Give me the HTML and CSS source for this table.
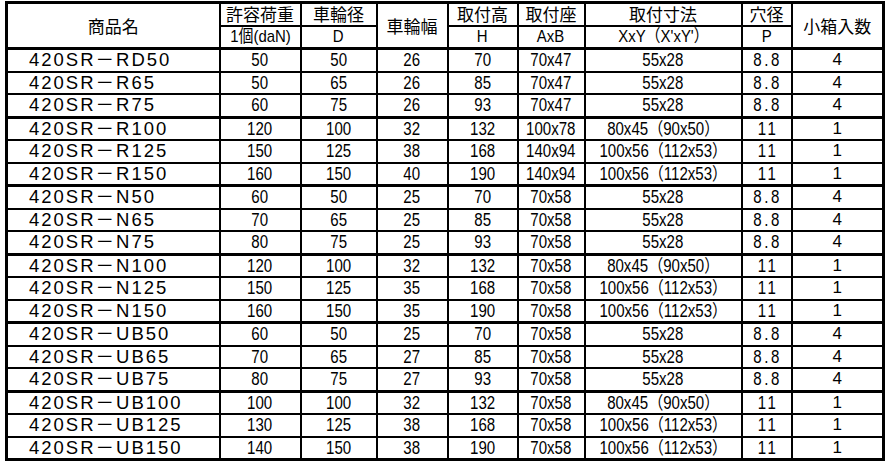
FILE: index.html
```html
<!DOCTYPE html>
<html lang="ja">
<head>
<meta charset="utf-8">
<title>420SR</title>
<link rel="stylesheet" href="styles.css">
</head>
<body>
<table class="spec">
  <colgroup>
    <col class="c-name"><col class="c-load"><col class="c-dia"><col class="c-wid"><col class="c-h"><col class="c-ab"><col class="c-xy"><col class="c-p"><col class="c-box">
  </colgroup>
  <thead>
    <tr class="h1">
      <th rowspan="2" class="jp">商品名</th>
      <th class="jp">許容荷重</th>
      <th class="jp">車輪径</th>
      <th rowspan="2" class="jp">車輪幅</th>
      <th class="jp">取付高</th>
      <th class="jp">取付座</th>
      <th class="jp">取付寸法</th>
      <th class="jp">穴径</th>
      <th rowspan="2" class="jp">小箱入数</th>
    </tr>
    <tr class="h2">
      <th class="num"><span>1個(daN)</span></th>
      <th class="num"><span>D</span></th>
      <th class="num"><span>H</span></th>
      <th class="num"><span>AxB</span></th>
      <th class="num"><span>XxY（X'xY'）</span></th>
      <th class="num"><span>P</span></th>
    </tr>
  </thead>
  <tbody>
    <tr><td class="name">420SR－RD50</td><td><span>50</span></td><td><span>50</span></td><td><span>26</span></td><td><span>70</span></td><td><span>70x47</span></td><td><span>55x28</span></td><td class="p"><span>8.8</span></td><td class="box">4</td></tr>
    <tr><td class="name">420SR－R65</td><td><span>50</span></td><td><span>65</span></td><td><span>26</span></td><td><span>85</span></td><td><span>70x47</span></td><td><span>55x28</span></td><td class="p"><span>8.8</span></td><td class="box">4</td></tr>
    <tr class="grp"><td class="name">420SR－R75</td><td><span>60</span></td><td><span>75</span></td><td><span>26</span></td><td><span>93</span></td><td><span>70x47</span></td><td><span>55x28</span></td><td class="p"><span>8.8</span></td><td class="box">4</td></tr>
    <tr><td class="name">420SR－R100</td><td><span>120</span></td><td><span>100</span></td><td><span>32</span></td><td><span>132</span></td><td><span>100x78</span></td><td><span>80x45（90x50）</span></td><td class="p"><span>11</span></td><td class="box">1</td></tr>
    <tr><td class="name">420SR－R125</td><td><span>150</span></td><td><span>125</span></td><td><span>38</span></td><td><span>168</span></td><td><span>140x94</span></td><td><span>100x56（112x53）</span></td><td class="p"><span>11</span></td><td class="box">1</td></tr>
    <tr class="grp"><td class="name">420SR－R150</td><td><span>160</span></td><td><span>150</span></td><td><span>40</span></td><td><span>190</span></td><td><span>140x94</span></td><td><span>100x56（112x53）</span></td><td class="p"><span>11</span></td><td class="box">1</td></tr>
    <tr><td class="name">420SR－N50</td><td><span>60</span></td><td><span>50</span></td><td><span>25</span></td><td><span>70</span></td><td><span>70x58</span></td><td><span>55x28</span></td><td class="p"><span>8.8</span></td><td class="box">4</td></tr>
    <tr><td class="name">420SR－N65</td><td><span>70</span></td><td><span>65</span></td><td><span>25</span></td><td><span>85</span></td><td><span>70x58</span></td><td><span>55x28</span></td><td class="p"><span>8.8</span></td><td class="box">4</td></tr>
    <tr class="grp"><td class="name">420SR－N75</td><td><span>80</span></td><td><span>75</span></td><td><span>25</span></td><td><span>93</span></td><td><span>70x58</span></td><td><span>55x28</span></td><td class="p"><span>8.8</span></td><td class="box">4</td></tr>
    <tr><td class="name">420SR－N100</td><td><span>120</span></td><td><span>100</span></td><td><span>32</span></td><td><span>132</span></td><td><span>70x58</span></td><td><span>80x45（90x50）</span></td><td class="p"><span>11</span></td><td class="box">1</td></tr>
    <tr><td class="name">420SR－N125</td><td><span>150</span></td><td><span>125</span></td><td><span>35</span></td><td><span>168</span></td><td><span>70x58</span></td><td><span>100x56（112x53）</span></td><td class="p"><span>11</span></td><td class="box">1</td></tr>
    <tr class="grp"><td class="name">420SR－N150</td><td><span>160</span></td><td><span>150</span></td><td><span>35</span></td><td><span>190</span></td><td><span>70x58</span></td><td><span>100x56（112x53）</span></td><td class="p"><span>11</span></td><td class="box">1</td></tr>
    <tr><td class="name">420SR－UB50</td><td><span>60</span></td><td><span>50</span></td><td><span>25</span></td><td><span>70</span></td><td><span>70x58</span></td><td><span>55x28</span></td><td class="p"><span>8.8</span></td><td class="box">4</td></tr>
    <tr><td class="name">420SR－UB65</td><td><span>70</span></td><td><span>65</span></td><td><span>27</span></td><td><span>85</span></td><td><span>70x58</span></td><td><span>55x28</span></td><td class="p"><span>8.8</span></td><td class="box">4</td></tr>
    <tr class="grp"><td class="name">420SR－UB75</td><td><span>80</span></td><td><span>75</span></td><td><span>27</span></td><td><span>93</span></td><td><span>70x58</span></td><td><span>55x28</span></td><td class="p"><span>8.8</span></td><td class="box">4</td></tr>
    <tr><td class="name">420SR－UB100</td><td><span>100</span></td><td><span>100</span></td><td><span>32</span></td><td><span>132</span></td><td><span>70x58</span></td><td><span>80x45（90x50）</span></td><td class="p"><span>11</span></td><td class="box">1</td></tr>
    <tr><td class="name">420SR－UB125</td><td><span>130</span></td><td><span>125</span></td><td><span>38</span></td><td><span>168</span></td><td><span>70x58</span></td><td><span>100x56（112x53）</span></td><td class="p"><span>11</span></td><td class="box">1</td></tr>
    <tr><td class="name">420SR－UB150</td><td><span>140</span></td><td><span>150</span></td><td><span>38</span></td><td><span>190</span></td><td><span>70x58</span></td><td><span>100x56（112x53）</span></td><td class="p"><span>11</span></td><td class="box">1</td></tr>
  </tbody>
</table>
</body>
</html>
```
FILE: styles.css
```css
html, body {
  margin: 0;
  padding: 0;
  background: #fff;
}

.spec {
  border-collapse: collapse;
  table-layout: fixed;
  width: 877px;
  margin: 1px 0 0 5px;
  border: 3px solid #000;
  color: #000;
}

.c-name { width: 213px; }
.c-load { width: 81px; }
.c-dia { width: 76px; }
.c-wid { width: 71px; }
.c-h { width: 70px; }
.c-ab { width: 67px; }
.c-xy { width: 157px; }
.c-p { width: 50px; }
.c-box { width: 92px; }

.spec th,
.spec td {
  border: 2px solid #000;
  padding: 0;
  text-align: center;
  vertical-align: middle;
  font-weight: normal;
  white-space: nowrap;
  overflow: hidden;
}

.spec td {
  height: 20.5px;
  font-family: "Liberation Sans", "Noto Sans CJK JP", sans-serif;
  font-size: 17.5px;
  line-height: 18px;
}

.spec td span,
.spec th.num span {
  display: inline-block;
  transform: scaleX(0.86);
  transform-origin: center;
}

.spec th.num span {
  transform: scaleX(0.88);
}

.spec thead tr.h1 th {
  height: 20.5px;
}

.spec thead tr.h2 th {
  height: 20.5px;
  border-bottom-width: 3px;
}

.spec th.jp {
  font-family: "Noto Sans CJK JP", "Noto Sans CJK SC", sans-serif;
  font-size: 17px;
  line-height: 18px;
}

.spec th[rowspan] {
  border-bottom-width: 3px;
}

.spec th.num {
  font-family: "Liberation Sans", "Noto Sans CJK JP", sans-serif;
  font-size: 17px;
  line-height: 18px;
}

.spec td.name {
  text-align: left;
  padding-left: 21px;
  font-family: "Liberation Sans", "Noto Sans CJK JP", sans-serif;
  font-size: 18.5px;
  letter-spacing: 2px;
}

.spec td.p span {
  letter-spacing: 3px;
  margin-right: -3px;
}

.spec td.box {
  font-family: "Liberation Sans", sans-serif;
  font-size: 17px;
}

.spec tr.grp td {
  border-bottom-width: 3px;
}
```
